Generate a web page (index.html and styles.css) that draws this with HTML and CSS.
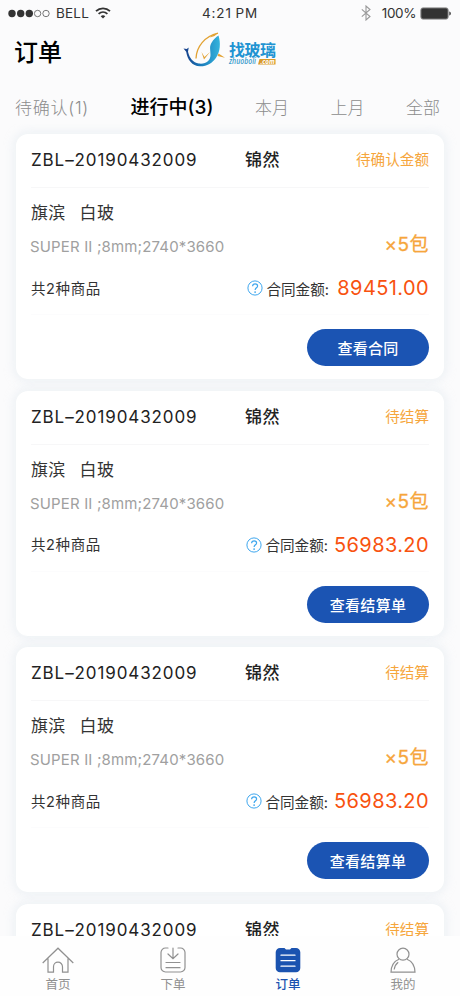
FILE: index.html
```html
<!DOCTYPE html>
<html lang="zh-CN">
<head>
  <meta charset="UTF-8" />
  <meta name="viewport" content="width=device-width, initial-scale=1.0"/>
  <title>订单</title>
  <link rel="stylesheet" href="styles.css">
</head>
<body>
  <div class="app">

    <!-- Status bar -->
    <div class="status-bar">
      <div class="signal">
        <svg width="42" height="9" viewBox="0 0 42 9">
          <g fill="#333"><circle cx="4" cy="4.5" r="3.7"/><circle cx="12.7" cy="4.5" r="3.7"/><circle cx="21.3" cy="4.5" r="3.7"/></g>
          <g fill="none" stroke="#555" stroke-width=".8"><circle cx="29.6" cy="4.5" r="3.2"/><circle cx="38" cy="4.5" r="3.2"/></g>
        </svg>
        <span class="carrier">BELL</span>
        <svg width="16" height="12" viewBox="0 0 16 12" fill="none" stroke="#333" stroke-width="1.8">
          <path d="M1 4.2C5 .3 11 .3 15 4.2M3.6 6.9c2.6-2.4 6.2-2.4 8.8 0"/>
          <path d="M8 11.5 5.7 9.2c1.3-1.2 3.3-1.2 4.6 0z" fill="#333" stroke="none"/>
        </svg>
      </div>
      <span class="clock">4:21 PM</span>
      <div class="power">
        <svg width="10" height="16" viewBox="0 0 10 16" fill="none" stroke="#999" stroke-width="1.1">
          <path d="M.8 4.3 9 11.5 5 15V1l4 3.5L.8 11.7"/>
        </svg>
        <span class="percent">100%</span>
        <svg width="32" height="13" viewBox="0 0 32 13">
          <rect x=".9" y=".9" width="27.2" height="11.2" rx="2" fill="#333" stroke="#888" stroke-width="1"/>
          <path d="M29.3 4.5c2 .6 2 3.4 0 4z" fill="#333"/>
        </svg>
      </div>
    </div>

    <!-- Title and logo -->
    <header class="top">
      <h1>订单</h1>
      <svg class="logo" width="96" height="38" viewBox="0 0 96 38">
        <defs>
          <linearGradient id="fish" x1="0" x2="1">
            <stop offset="0" stop-color="#173a86"/>
            <stop offset=".45" stop-color="#1877b8"/>
            <stop offset="1" stop-color="#35b4dd"/>
          </linearGradient>
        </defs>
        <path d="M.5 16.5 3.7 17l2-1.500-.7 4.200c1.500 6.500 5 10.800 10.800 11.800 7 1 11.700-3 11.700-8.500 0-6-1.500-8 1.200-12.500C30.500 7.500 33 5 35.500 3.500c2.500 8 1.500 16-2 21.500-4 6.300-10 9.500-16.500 9.300C9 34 4.300 27.500 3.200 19.700z" fill="url(#fish)"/>
        <path d="M13 26.500C13.500 14.500 21.500 4.500 35 1.200" fill="none" stroke="#e2a233" stroke-width="1.3"/>
        <path d="M35 1 31.500 4 27 5.500C29 3 32 1.800 35 1z" fill="#e2a233"/>
        <path d="m18.500 20 2.500 7.500L27 20l-5.500 5z" fill="#e2a233"/>
        <path d="m35.500 21.500 6.500 4.300-7.500-1.800z" fill="#e2a233"/>
        <text class="logo-name" x="46" y="23.500" textLength="47">找玻璃</text>
        <text class="logo-latin" x="46" y="32.300" textLength="27" lengthAdjust="spacingAndGlyphs">zhuoboli</text>
        <path d="M76.500 27h16v5.500H75z" fill="#d99a2b"/>
        <text class="logo-com" x="77.500" y="31.800" textLength="14" lengthAdjust="spacingAndGlyphs">.com</text>
      </svg>
    </header>

    <!-- Filter tabs -->
    <nav class="tabs">
      <a class="tab pending">待确认(1)</a>
      <a class="tab active">进行中(3)</a>
      <a class="tab">本月</a>
      <a class="tab">上月</a>
      <a class="tab">全部</a>
    </nav>

    <!-- Orders -->
    <main class="orders">
      <section class="card">
        <div class="card-head">
          <span class="order-no">ZBL–20190432009</span>
          <span class="customer">锦然</span>
          <span class="state">待确认金额</span>
        </div>
        <div class="goods"><span>旗滨</span><span>白玻</span></div>
        <div class="spec-row">
          <span class="spec">SUPER II ;8mm;2740*3660</span>
          <span class="qty">×5包</span>
        </div>
        <div class="total-row">
          <span class="kinds">共2种商品</span>
          <svg class="help" width="16" height="16" viewBox="0 0 16 16"><use href="#help"/></svg>
          <span class="amount-label">合同金额:</span>
          <span class="amount">89451.00</span>
        </div>
        <div class="actions"><button class="btn">查看合同</button></div>
      </section>

      <section class="card">
        <div class="card-head">
          <span class="order-no">ZBL–20190432009</span>
          <span class="customer">锦然</span>
          <span class="state">待结算</span>
        </div>
        <div class="goods"><span>旗滨</span><span>白玻</span></div>
        <div class="spec-row">
          <span class="spec">SUPER II ;8mm;2740*3660</span>
          <span class="qty">×5包</span>
        </div>
        <div class="total-row">
          <span class="kinds">共2种商品</span>
          <svg class="help" width="16" height="16" viewBox="0 0 16 16"><use href="#help"/></svg>
          <span class="amount-label">合同金额:</span>
          <span class="amount">56983.20</span>
        </div>
        <div class="actions"><button class="btn">查看结算单</button></div>
      </section>

      <section class="card">
        <div class="card-head">
          <span class="order-no">ZBL–20190432009</span>
          <span class="customer">锦然</span>
          <span class="state">待结算</span>
        </div>
        <div class="goods"><span>旗滨</span><span>白玻</span></div>
        <div class="spec-row">
          <span class="spec">SUPER II ;8mm;2740*3660</span>
          <span class="qty">×5包</span>
        </div>
        <div class="total-row">
          <span class="kinds">共2种商品</span>
          <svg class="help" width="16" height="16" viewBox="0 0 16 16"><use href="#help"/></svg>
          <span class="amount-label">合同金额:</span>
          <span class="amount">56983.20</span>
        </div>
        <div class="actions"><button class="btn">查看结算单</button></div>
      </section>

      <section class="card">
        <div class="card-head">
          <span class="order-no">ZBL–20190432009</span>
          <span class="customer">锦然</span>
          <span class="state">待结算</span>
        </div>
      </section>
    </main>

    <!-- Bottom tab bar -->
    <footer class="tabbar">
      <a class="item">
        <svg width="32" height="26" viewBox="0 0 32 26" fill="none" stroke="#909090" stroke-width="1.2">
          <path d="M.7 16 16 1.2 31.3 16M6 11.500v13.700h5.500v-5.500a4.500 4.500 0 0 1 9 0v5.500H26V11.500"/>
        </svg>
        <span>首页</span>
      </a>
      <a class="item">
        <svg width="26" height="26" viewBox="0 0 26 26" fill="none" stroke="#909090" stroke-width="1.2" stroke-linecap="round">
          <path d="M8 1H5.500A4.500 4.500 0 0 0 1 5.500v15A4.500 4.500 0 0 0 5.500 25h15a4.500 4.500 0 0 0 4.500-4.500v-15A4.500 4.500 0 0 0 20.500 1H18M13 1v10.500M8 7l5 4.700L18 7M6 15.500h14M6 20.700h14"/>
        </svg>
        <span>下单</span>
      </a>
      <a class="item current">
        <svg width="26" height="26" viewBox="0 0 26 26">
          <path d="M5 1h4.500l1.500 1.500h4L16.500 1H21a4.300 4.300 0 0 1 4.300 4.300V21a4.300 4.300 0 0 1-4.300 4.300H5A4.300 4.300 0 0 1 .7 21V5.300A4.300 4.300 0 0 1 5 1z" fill="#1b53b0"/>
          <path d="M6 8.200h14M6 13.700h14M6 19.200h14" stroke="#fff" stroke-width="1.3" stroke-linecap="round"/>
        </svg>
        <span>订单</span>
      </a>
      <a class="item">
        <svg width="26" height="26" viewBox="0 0 26 26" fill="none" stroke="#909090" stroke-width="1.2">
          <circle cx="13" cy="7.200" r="6"/>
          <path d="M9 12.300C4.200 14.200 1.200 19 1 25.200h24c-.2-6.200-3.200-11-8-12.900M4.200 22.500c.4-3 1.700-5.400 4-7.200"/>
        </svg>
        <span>我的</span>
      </a>
    </footer>
  </div>

  <svg width="0" height="0" class="defs">
    <symbol id="help" viewBox="0 0 16 16">
      <circle cx="8" cy="8" r="7.1" fill="none" stroke="#3fa7ee" stroke-width="1"/>
      <path d="M5.600 6.300c0-1.500 1-2.500 2.500-2.500s2.500.9 2.500 2.200c0 1.800-2.500 1.900-2.500 4" fill="none" stroke="#3fa7ee" stroke-width="1.2"/>
      <circle cx="8.1" cy="12.1" r=".9" fill="#3fa7ee"/>
    </symbol>
  </svg>
</body>
</html>
```
FILE: styles.css
```css
* { margin: 0; padding: 0; box-sizing: border-box; }
body {
  font-family: Inter, "Noto Sans CJK SC", sans-serif;
  background: #fbfbfc;
  color: #333;
  overflow: hidden;
}
.app {
  width: 460px;
  height: 996px;
  display: flex;
  flex-direction: column;
  overflow: hidden;
}
.app svg { flex: none; display: block; }
.defs { display: block; }

.status-bar {
  height: 26px;
  flex: none;
  display: flex;
  align-items: center;
  justify-content: space-between;
  padding: 0 8px;
  font-size: 13.5px;
  line-height: 26px;
}
.signal, .power { display: flex; align-items: center; width: 180px; }
.carrier { margin: 0 6px 0 6px; letter-spacing: .2px; }
.clock { letter-spacing: .9px; font-size: 13.5px; word-spacing: -1px; }
.power { justify-content: flex-end; }
.percent { margin: 0 4px 0 11px; letter-spacing: -.4px; }

.top {
  height: 60px;
  flex: none;
  display: flex;
  align-items: flex-start;
  padding: 5px 0 0 14px;
}
h1 {
  width: 169px;
  font-size: 24px;
  line-height: 43px;
  font-weight: 500;
  color: #000;
}
.logo { margin-top: 1px; }
.logo-name { font: 700 16px "Noto Sans CJK SC", sans-serif; fill: #2093d2; }
.logo-latin { font: italic 600 8px "Open Sans", sans-serif; fill: #3b9ccc; }
.logo-com { font: italic 700 7px "Open Sans", sans-serif; fill: #fff; }

.tabs {
  height: 38px;
  flex: none;
  display: flex;
  align-items: flex-start;
  justify-content: space-between;
  padding: 6px 20px 0 15px;
}
.tab {
  font-size: 17px;
  line-height: 32px;
  font-weight: 300;
  color: #8c8c8c;
  white-space: nowrap;
}
.tab.pending { letter-spacing: .75px; }
.tab.active { font-size: 19px; font-weight: 500; color: #000; }

.orders {
  flex: 1;
  min-height: 0;
  overflow: hidden;
  display: flex;
  flex-direction: column;
  gap: 11.5px;
  padding: 10px 16px 0;
}
.card {
  flex: none;
  height: 245px;
  background: #fff;
  border-radius: 12px;
  padding: 0 15px;
  box-shadow: 0 0 10px 3px rgba(215, 225, 235, .35);
}
.card-head {
  height: 54px;
  display: flex;
  align-items: center;
  border-bottom: 1px solid #f7f7f8;
  white-space: nowrap;
  color: #222;
  line-height: 24px;
  padding-bottom: 1px;
}
.order-no { width: 214px; font-size: 17px; letter-spacing: .9px; }
.customer { font-size: 17px; font-weight: 500; letter-spacing: .5px; }
.state { margin-left: auto; font-size: 14.6px; color: #f6a63c; }
.goods {
  display: flex;
  gap: 14px;
  height: 50px;
  font-size: 17px;
  line-height: 51px;
  letter-spacing: .3px;
}
.spec-row { display: flex; justify-content: space-between; align-items: center; height: 17px; }
.spec { font-size: 15px; color: #a0a0a0; letter-spacing: .15px; white-space: pre; margin-left: -1px; }
.qty { font-size: 19px; line-height: 24px; color: #f6a63c; letter-spacing: .5px; margin: -3px 0 0; -webkit-text-stroke: .3px #f6a63c; }
.total-row {
  display: flex;
  align-items: center;
  height: 60px;
  padding-top: 7px;
  border-bottom: 1px solid #fcfcfd;
  white-space: nowrap;
}
.kinds { font-size: 14.5px; line-height: 24px; margin-right: auto; letter-spacing: .6px; padding-top: 1px; }
.amount-label { font-size: 14.6px; margin: 0 6px 0 3px; }
.amount { font-size: 20px; color: #f8520f; letter-spacing: .4px; min-width: 94px; text-align: right; }
.actions { display: flex; justify-content: flex-end; padding-top: 14px; }
.btn {
  width: 122px;
  height: 37px;
  border: none;
  border-radius: 19px;
  background: #1b54b3;
  color: #fff;
  font-family: inherit;
  font-size: 15px;
  font-weight: 500;
  letter-spacing: .3px;
}

.tabbar {
  height: 60px;
  flex: none;
  display: flex;
  background: #fefefe;
}
.item {
  width: 115px;
  display: flex;
  flex-direction: column;
  align-items: center;
  padding: 11px 0 0 1px;
  font-size: 12.5px;
  line-height: 23px;
  color: #909090;
}
.item.current { color: #1b53b0; font-weight: 500; }
```
